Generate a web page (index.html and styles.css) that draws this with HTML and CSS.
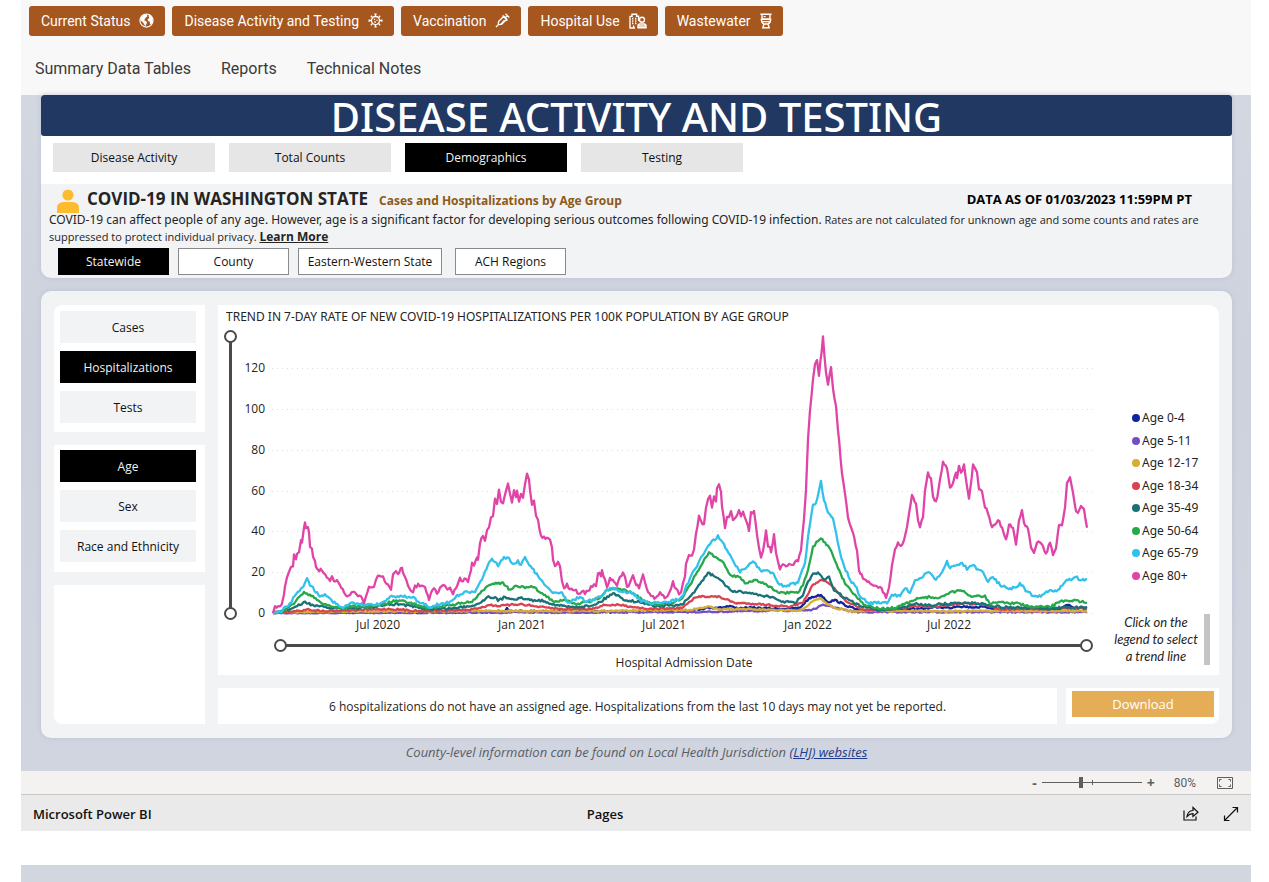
FILE: index.html
```html
<!DOCTYPE html>
<html lang="en">
<head>
<meta charset="utf-8">
<title>COVID-19 Data Dashboard</title>
<link rel="stylesheet" href="styles.css">
</head>
<body>
<div class="page">
  <header class="top">
    <nav class="pills">
      <button class="pill">Current Status
        <svg viewBox="0 0 16 16" width="15" height="15"><circle cx="8" cy="8" r="7" fill="none" stroke="#fff" stroke-width="1.2"/><path fill="#fff" d="M2 4.500 5.500 1.500 8.700 1.400 8.600 4 6.600 5.200 6.400 7 4.800 7.400 7.400 8.600 8.600 10 7.600 12.200 6.600 14.400 5.400 11.600 3.600 9.400 1.400 8ZM10.200 1.600 13 3 14.600 6.400 14.600 9.600 12.800 12.600 11.600 11.200 11.600 9.400 9.600 8.600 9.200 6.600 11 5.400 10.400 4Z"/></svg></button>
      <button class="pill">Disease Activity and Testing
        <svg viewBox="0 0 16 16" width="15" height="15" fill="none" stroke="#fff" stroke-width="1.400"><circle cx="8" cy="8" r="4.300"/><path d="M8 3.700V1M8 12.300V15M3.700 8H1M12.300 8H15M5 5 3 3M11 5l2-2M5 11l-2 2M11 11l2 2M6.800 1.200h2.400M6.800 14.800h2.400M1.200 6.800v2.400M14.800 6.800v2.400"/><path d="M6.200 6.800h1.400M9 7.800h1.200M6.800 9.600h1.600"/></svg></button>
      <button class="pill">Vaccination
        <svg viewBox="0 0 16 16" width="15" height="15" fill="none" stroke="#fff" stroke-width="1.400"><path d="M1 15l2.600-2.600M3.600 12.400 3.800 9 9.400 3.400l3.200 3.200L7 12.200ZM8 2.800l5.200 5.200M11 5l2.200-2.200M11.200.8l4 4M6 12.200 10 8"/></svg></button>
      <button class="pill">Hospital Use
        <svg viewBox="0 0 18 16" width="18" height="16" fill="none" stroke="#fff" stroke-width="1.400"><path d="M1 15V3.400h2V1.200h4.600v2h2V8M.4 15H6M4.600 15v-2.400"/><path d="M3 5.600h1.400M6 5.600h1.400M3 8h1.400M6 8h1.400M3 10.400h1.400M6 10.400h1.400" stroke-width="1.600"/><circle cx="13" cy="6.800" r="2.500"/><path d="M9 14.800v-1.800q0-2 2-2h4q2 0 2 2v1.800ZM9 13h8"/></svg></button>
      <button class="pill">Wastewater
        <svg viewBox="2 0 12 16" width="12" height="16" fill="none" stroke="#fff" stroke-width="1.400"><path d="M2.400 1.200h11.200M4 1.200v4.800h8V1.200M5.600 3.600h2M2.600 6.400h10.800M3.400 6.400c0 2.400 1 4 2.600 4.600h4c1.600-.6 2.600-2.200 2.600-4.600M4.600 8.600h6.800M6 11l-1.200 3.800h6.400L10 11"/></svg></button>
    </nav>
    <nav class="links">
      <a href="#tables">Summary Data Tables</a>
      <a href="#reports">Reports</a>
      <a href="#notes">Technical Notes</a>
    </nav>
  </header>

  <main class="stage">
    <section class="card intro-card">
      <h1 class="banner">DISEASE ACTIVITY AND TESTING</h1>
      <div class="tabs">
        <button class="tab">Disease Activity</button>
        <button class="tab">Total Counts</button>
        <button class="tab dark">Demographics</button>
        <button class="tab">Testing</button>
      </div>
      <div class="intro">
        <div class="heading">
          <svg class="person" viewBox="0 0 24 24" width="24" height="24" fill="#fdbb30"><circle cx="12" cy="6" r="5.600"/><path d="M1 24v-4.500Q1 13 7.500 13h9Q23 13 23 19.500V24Z"/></svg>
          <h2>COVID-19 IN WASHINGTON STATE</h2>
          <h3>Cases and Hospitalizations by Age Group</h3>
          <strong class="asof">DATA AS OF 01/03/2023 11:59PM PT</strong>
        </div>
        <p class="copy"><span class="lead">COVID-19 can affect people of any age. However, age is a significant factor for developing serious outcomes following COVID-19 infection.</span> Rates are not calculated for unknown age and some counts and rates are suppressed to protect individual privacy. <a class="more" href="#more">Learn More</a></p>
        <div class="scopes">
          <button class="scope dark">Statewide</button>
          <button class="scope">County</button>
          <button class="scope wide">Eastern-Western State</button>
          <button class="scope">ACH Regions</button>
        </div>
      </div>
    </section>

    <section class="card board">
      <aside class="side">
        <div class="group first">
          <button class="choice">Cases</button>
          <button class="choice dark">Hospitalizations</button>
          <button class="choice">Tests</button>
        </div>
        <div class="group">
          <button class="choice dark">Age</button>
          <button class="choice">Sex</button>
          <button class="choice">Race and Ethnicity</button>
        </div>
        <div class="group filler"></div>
      </aside>
      <div class="content">
        <div class="chart">
          <div class="chart-main">
            <h4>TREND IN 7-DAY RATE OF NEW COVID-19 HOSPITALIZATIONS PER 100K POPULATION BY AGE GROUP</h4>
            <div class="plot-row">
              <div class="span vertical">
                <input type="range" aria-label="Lowest rate" value="0">
                <input type="range" aria-label="Highest rate" value="100">
              </div>
              <svg class="plot" id="plot" viewBox="238 329 860 304" role="img" aria-label="Hospitalization rate by age group"></svg>
            </div>
            <div class="span horizontal">
              <input type="range" aria-label="First date" value="0">
              <input type="range" aria-label="Last date" value="100">
            </div>
            <div class="axis-title">Hospital Admission Date</div>
          </div>
          <div class="legend-col">
            <ul class="legend">
              <li>Age 0-4</li>
              <li>Age 5-11</li>
              <li>Age 12-17</li>
              <li>Age 18-34</li>
              <li>Age 35-49</li>
              <li>Age 50-64</li>
              <li>Age 65-79</li>
              <li>Age 80+</li>
            </ul>
            <div class="hint">Click on the legend to select a trend line</div>
          </div>
        </div>
        <div class="bottom">
          <p class="note">6 hospitalizations do not have an assigned age. Hospitalizations from the last 10 days may not yet be reported.</p>
          <div class="download"><button>Download</button></div>
        </div>
      </div>
    </section>
    <p class="county">County-level information can be found on Local Health Jurisdiction <a href="#lhj">(LHJ) websites</a></p>
  </main>

  <div class="zoombar">
    <button aria-label="Zoom out">-</button>
    <input type="range" aria-label="Zoom" value="39">
    <button aria-label="Zoom in">+</button>
    <span>80%</span>
    <button class="fit" aria-label="Fit to page"><svg viewBox="0 0 16 12" width="16" height="12" fill="none" stroke="#605e5c"><path d="M.5.5h15v11H.5ZM2.500 4.500v-2h2M11.500 2.500h2v2M13.500 7.500v2h-2M4.500 9.500h-2v-2"/></svg></button>
  </div>
  <footer class="bi">
    <a href="#bi">Microsoft Power BI</a>
    <span class="pages">Pages</span>
    <div class="tools">
      <button aria-label="Share"><svg viewBox="0 0 16 16" width="16" height="16" fill="none" stroke="#111" stroke-width="1.200"><path d="M1 4.500v9.500h12v-3.500"/><path d="M4 10.500Q4.500 5 10 4.500V1.500L15 6.200 10 10.500V7.600Q6.500 7.500 4 10.500Z"/></svg></button>
      <button aria-label="Full screen"><svg viewBox="0 0 16 16" width="16" height="16" fill="none" stroke="#111" stroke-width="1.200"><path d="M1.500 14.500 14.500 1.500M9.500 1.500h5v5M1.500 9.500v5h5"/></svg></button>
    </div>
  </footer>
  <div class="next"></div>
</div>
<script src="script.js"></script>
</body>
</html>
```
FILE: styles.css
```css
* { box-sizing: border-box; }
body { margin: 0; background: #fff; color: #252423; font: 12px/18px "Open Sans", "Noto Sans", sans-serif; }
h1, h2, h3, h4, p, ul { margin: 0; padding: 0; }
button { font: inherit; color: inherit; border: 0; background: none; padding: 0; cursor: pointer; }
.page { margin: 0 18px 0 21px; }
.top { background: #f8f8f8; height: 95px; font-family: Roboto, sans-serif; }
.pills { display: flex; gap: 7px; padding: 6px 8px 0; }
.pill { display: flex; align-items: center; gap: 9px; height: 30px; padding: 0 11px 1px 12px; background: #a6561f; color: #fff; border-radius: 3px; font-size: 14px; white-space: nowrap; }
.links { display: flex; gap: 30px; padding: 20px 14px 0; font-size: 16px; line-height: 26px; }
.links a { color: #3a3a3a; text-decoration: none; }

.stage { background: linear-gradient(#d3d7e0, #cdd2dd 40%, #d1d5df); padding: 0 19px 10px 20px; }
.card { background: #f2f3f5; border-radius: 10px; box-shadow: 0 0 5px #bcc1d2; }
.intro-card { border-radius: 3px 3px 10px 10px; overflow: hidden; }
.banner { height: 41px; background: #213862; border-radius: 3px; color: #fff; text-align: center; font: 500 40px/43px "Noto Sans", sans-serif; }
.tabs { display: flex; gap: 14px; padding: 7px 12px 12px; background: #fff; }
.tab { width: 162px; height: 29px; background: #e6e6e6; color: #111; }
button.dark { background: #000; color: #f2f2f2; border-color: #000; }
.intro { padding: 3px 13px 3px 8px; }
.heading { display: flex; align-items: center; height: 24px; }
.person { margin: 4px 7px 0; }
h2 { font-size: 17px; line-height: 24px; font-weight: 700; }
h3 { font-size: 12px; font-weight: 700; color: #8d5a17; margin-left: 11px; padding-top: 3px; }
.asof { margin-left: auto; margin-right: 27px; color: #000; font-size: 13px; }
.copy { font-size: 11px; line-height: 17px; }
.lead { font-family: "Noto Sans", sans-serif; font-size: 12px; }
.more { font-size: 12px; font-weight: 700; color: #252423; }
.scopes { display: flex; gap: 9px; padding: 3px 9px 0; }
.scope { width: 111px; height: 27px; border: 1px solid #8a8a8a; background: #fff; color: #111; }
.scope.wide { width: 144px; margin-right: 4px; }

.board { margin-top: 13px; padding: 14px 13px; display: flex; gap: 13px; }
.side { width: 151px; flex: none; display: flex; flex-direction: column; gap: 13px; }
.group { background: #fff; padding: 5px 9px 10px 6px; display: flex; flex-direction: column; gap: 8px; }
.group.first { border-top-left-radius: 8px; padding-top: 6px; padding-bottom: 9px; }
.filler { flex: 1; border-bottom-left-radius: 8px; }
.choice { height: 32px; padding-top: 2px; background: #f2f3f5; color: #111; }
.content { flex: 1; min-width: 0; display: flex; flex-direction: column; gap: 13px; }
.chart { background: #fff; border-top-right-radius: 10px; display: flex; height: 370px; }
.chart-main { flex: 1; min-width: 0; }
h4 { font: 12px/24px "Noto Sans", sans-serif; padding-left: 8px; }
.plot-row { display: flex; padding-left: 6px; gap: 1px; }
.plot { flex: 1; min-width: 0; display: block; font-size: 12px; }
.plot text { fill: #252423; }
.plot .series { fill: none; stroke-width: 2.3px; stroke-linejoin: round; }
.plot .grid { stroke: #dcdcdc; stroke-dasharray: 1 4; }
.span { position: relative; flex: none; }
.span::before { content: ""; position: absolute; background: #4a4a4a; }
.span input { position: absolute; inset: 0; margin: 0; width: 100%; height: 100%; appearance: none; background: none; pointer-events: none; }
.span input::-webkit-slider-thumb { appearance: none; box-sizing: border-box; width: 13px; height: 13px; border: 2px solid #4a4a4a; border-radius: 50%; background: #fff; pointer-events: auto; }
.vertical { width: 13px; height: 290px; margin-top: 1px; }
.vertical::before { left: 5px; width: 3px; top: 10px; bottom: 10px; }
.vertical input { writing-mode: vertical-lr; direction: rtl; }
.horizontal { height: 13px; margin: 6px 5px 0 56px; }
.horizontal::before { top: 5px; height: 3px; left: 10px; right: 10px; }
.axis-title { text-align: center; padding-left: 52px; line-height: 22px; }
.legend-col { width: 121px; flex: none; padding: 102px 9px 0 0; }
.legend { list-style: none; padding-left: 34px; height: 180px; display: grid; grid-auto-rows: 1fr; font-family: "Noto Sans", sans-serif; }
.legend li { color: var(--dot); white-space: nowrap; display: flex; align-items: center; gap: 2px; }
.legend li::before { content: ""; width: 8px; height: 8px; border-radius: 50%; background: currentColor; }
.legend span { color: #252423; }
.hint { margin-top: 27px; margin-left: 15px; padding-right: 5px; border-right: 6px solid #c4c4c4; text-align: center; font: italic 13px/17px Lato, sans-serif; }
.bottom { display: flex; gap: 9px; height: 36px; }
.note { flex: 1; background: #fff; text-align: center; line-height: 38px; }
.download { width: 153px; background: #fff; padding: 3px 5px 7px 6px; border-bottom-right-radius: 8px; }
.download button { display: block; width: 100%; height: 26px; background: #e5ad56; color: #fff; font-size: 13px; }
.county { text-align: center; font-size: 13px; font-style: italic; color: #595d66; margin-top: 5px; line-height: 18px; }
.county a { color: #1f3c8c; }

.zoombar { height: 24px; background: #f3f2f1; border-bottom: 1px solid #c8c8c8; display: flex; align-items: center; justify-content: flex-end; gap: 5px; padding-right: 18px; color: #605e5c; font-size: 12px; }
.zoombar button { font-weight: 700; font-size: 14px; line-height: 18px; }
.zoombar input { appearance: none; width: 100px; height: 11px; margin: 0; background: linear-gradient(#605e5c, #605e5c) center / 100% 1px no-repeat, linear-gradient(#605e5c, #605e5c) 50px center / 1px 5px no-repeat; }
.zoombar input::-webkit-slider-thumb { appearance: none; width: 4px; height: 11px; background: #605e5c; }
.zoombar span { margin: 0 16px 0 14px; font-family: Roboto, sans-serif; }
.zoombar .fit { display: flex; }
.bi { height: 36px; background: #eaeaea; color: #111; font-size: 13px; font-weight: 600; display: grid; grid-template-columns: 1fr auto 1fr; align-items: center; padding: 2px 12px 0; }
.bi a { color: inherit; text-decoration: none; }
.pages { margin-right: 62px; }
.tools { display: flex; gap: 24px; justify-content: flex-end; }
.tools svg { display: block; }
.next { margin-top: 34px; height: 17px; background: #d1d6df; }
```
FILE: script.js
```js
const BASE = 613, STEP = 40.8;
const series = [
  ["#12239e", 1, "273,613 490,612 500,611 505,612 507,608 510,611 600,612 690,611 705,608 725,607 730,606 735,608 760,608 780,609 800,608 806,601 812,597 821,595 828,602 835,600 845,605 860,611 900,610 915,609 940,607 950,608 957,606 970,607 985,607 1000,609 1060,609 1068,605 1075,608 1087,607"],
  ["#744ec2", .7, "273,613 700,612 812,610 823,605 830,606 840,609 855,612 1087,612"],
  ["#d6ae33", .8, "273,612 450,611 600,611 690,610 700,608 708,606 715,609 740,609 770,610 800,611 812,602 820,598 826,603 834,608 850,611 1087,611"],
  ["#d64550", .9, "273,613 300,611 307,609 320,611 390,609 420,611 470,610 490,605 500,606 520,604 540,607 560,609 590,609 605,605 620,605 650,609 682,608 695,598 702,596 720,597 735,603 760,604 790,607 803,603 812,586 822,580 830,584 845,600 860,609 880,611 915,606 930,607 965,603 985,605 1000,609 1040,609 1065,608 1087,609"],
  ["#197278", 1.2, "273,613 290,609 300,605 305,602 315,606 330,608 360,608 375,607 385,605 400,604 410,606 425,609 440,609 455,608 470,606 480,603 487,597 495,597 498,601 505,597 513,599 520,598 530,600 545,601 555,605 570,607 590,606 600,602 613,593 625,600 640,602 655,606 682,605 690,597 700,584 708,573 718,578 733,592 745,592 770,597 780,601 795,603 803,595 808,582 813,574 818,573 824,580 829,577 834,590 845,598 860,606 880,610 900,608 915,604 930,605 960,603 975,603 985,604 1000,607 1030,608 1050,609 1065,607 1087,608"],
  ["#27a84b", 1.2, "273,613 285,611 295,602 304,592 310,595 320,602 330,606 345,609 350,606 365,607 380,605 395,601 402,601 410,603 420,606 430,608 440,607 450,605 463,603 472,602 480,594 487,586 493,583 503,583 510,590 517,586 525,588 533,587 545,595 553,601 565,600 575,604 590,602 600,597 607,590 620,589 633,593 645,602 655,604 670,603 682,599 690,585 700,567 709,552 715,557 722,561 730,575 740,577 745,583 757,580 770,587 778,593 798,593 803,585 808,570 813,547 818,541 821,539 825,542 832,553 838,568 845,583 855,595 865,605 880,609 895,608 910,602 920,598 930,597 940,598 950,592 962,591 970,596 985,596 990,604 1000,602 1020,604 1030,607 1050,607 1060,602 1065,600 1087,602"],
  ["#33c1ec", 1.5, "273,613 282,611 290,603 298,592 305,583 307,578 310,585 320,596 325,594 333,602 343,608 353,603 365,605 380,604 390,597 402,596 412,597 420,603 430,607 440,604 450,602 460,594 467,592 475,592 482,580 488,564 492,558 498,566 504,557 509,558 513,564 518,561 521,565 525,557 535,573 543,582 553,593 562,593 568,602 580,597 587,602 600,597 610,588 620,591 633,593 640,600 650,603 667,603 682,597 690,578 700,560 707,547 718,536 727,550 733,560 740,572 747,567 753,561 760,570 772,572 778,583 783,586 798,583 805,563 808,537 813,505 816,503 819,490 821,481 824,500 828,512 833,518 838,543 843,563 850,580 855,585 860,597 868,603 887,603 892,595 900,596 905,588 910,593 915,580 923,577 928,572 936,580 942,572 947,561 950,568 962,563 967,569 972,565 983,572 988,582 993,577 1000,585 1010,588 1016,588 1020,583 1027,592 1038,597 1048,592 1058,590 1065,582 1077,576 1080,581 1087,579"],
  ["#e044a7", 1.8, "273,613 275,607 278,606 281,606 282,604 284,595 285,587 287,577 289,571 291,567 293,566 294,555 296,560 297,553 299,552 301,540 302,542 304,528 305,523 306,528 308,527 309,532 310,546 312,548 313,557 315,560 316,567 318,570 322,570 325,574 327,578 330,581 332,576 334,581 337,580 340,586 344,593 346,596 350,596 353,592 356,593 358,597 361,597 364,603 366,596 369,587 374,587 376,580 378,576 383,577 385,582 389,587 391,589 393,575 396,572 398,574 402,567 403,573 405,577 408,585 411,590 413,592 415,586 423,585 425,588 428,595 429,600 431,593 434,588 437,594 440,588 442,585 446,588 450,587 453,594 456,589 460,578 463,581 466,578 468,582 471,570 472,562 474,566 477,557 478,560 480,543 483,535 485,541 487,530 489,527 491,517 493,516 495,499 497,504 499,490 501,502 503,503 506,490 508,483 510,494 512,502 514,490 516,497 517,490 519,501 521,493 523,497 525,485 527,473 529,480 530,490 532,504 534,501 536,515 538,520 541,536 544,537 550,540 552,547 553,560 555,566 558,561 560,567 562,582 564,589 567,584 570,589 573,590 576,590 579,594 582,591 585,594 588,591 591,587 594,584 596,587 598,573 601,576 602,571 605,580 607,588 610,578 614,582 617,586 620,576 623,573 625,577 627,587 630,583 633,575 636,585 639,588 641,582 643,574 645,582 648,592 651,595 653,597 657,597 660,593 662,595 666,598 669,594 671,589 673,582 676,589 679,594 681,592 683,583 685,577 686,563 689,555 692,556 694,550 696,534 699,516 701,522 704,525 706,507 708,499 710,496 712,508 714,497 716,502 717,489 719,485 721,492 722,507 725,528 727,517 729,517 731,512 733,520 736,517 739,511 741,517 743,512 746,520 749,531 751,513 754,511 757,535 759,548 761,558 763,551 766,531 768,547 770,547 771,553 774,534 776,552 778,562 780,569 783,564 786,566 789,563 792,565 795,562 798,562 801,550 804,520 806,490 808,440 810,410 813,380 815,365 817,360 819,375 823,337 826,373 828,385 831,368 833,388 836,407 838,430 842,473 845,493 848,517 853,533 857,550 859,570 863,578 866,580 870,583 875,586 880,587 883,592 886,598 889,587 892,565 895,550 898,543 902,545 904,540 907,527 909,513 912,495 916,503 918,520 920,528 923,517 925,490 928,473 931,478 933,497 936,502 939,487 943,462 947,468 950,487 953,483 956,473 957,478 959,465 961,473 964,465 967,487 969,498 973,465 977,472 979,490 982,492 985,507 988,513 992,527 998,520 1002,528 1006,540 1009,525 1013,528 1016,544 1019,520 1022,511 1024,522 1028,528 1031,547 1034,553 1037,542 1040,542 1043,547 1046,553 1050,543 1053,555 1056,548 1058,533 1059,525 1062,525 1065,508 1067,483 1070,478 1073,493 1076,511 1078,513 1081,506 1084,510 1087,528"]
];

let seed = 7;
function noise() {
  seed = (seed * 16807) % 2147483647;
  return seed / 2147483647 - 0.5;
}

function daily(text, amount) {
  const pts = text.split(" ").map(p => p.split(",").map(Number));
  const out = [pts[0]];
  for (let i = 1; i < pts.length; i++) {
    const [x0, y0] = pts[i - 1], [x1, y1] = pts[i];
    const n = Math.max(1, Math.round((x1 - x0) / 1.5));
    for (let k = 1; k <= n; k++) {
      const t = k / n;
      const wob = k < n ? noise() * amount * 2 : noise() * amount;
      out.push([(x0 + (x1 - x0) * t).toFixed(1), Math.min(BASE, y0 + (y1 - y0) * t + wob).toFixed(1)]);
    }
  }
  return out.map(p => p.join(",")).join(" ");
}

let svg = "";
for (let i = 0; i <= 6; i++) {
  const y = BASE - Math.round(i * STEP);
  svg += `<line class="grid" x1="272" x2="1096" y1="${y + .5}" y2="${y + .5}"/><text x="265" y="${y + 4}" text-anchor="end">${i * 20}</text>`;
}
for (const [x, label] of [[378, "Jul 2020"], [522, "Jan 2021"], [664, "Jul 2021"], [808, "Jan 2022"], [949, "Jul 2022"]]) {
  svg += `<text x="${x}" y="629" text-anchor="middle">${label}</text>`;
}
for (const [color, amount, text] of series) {
  svg += `<polyline class="series" stroke="${color}" points="${daily(text, amount)}"/>`;
}
document.getElementById("plot").innerHTML = svg;

document.querySelectorAll(".legend li").forEach((li, i) => {
  const label = document.createElement("span");
  label.textContent = li.textContent;
  li.textContent = "";
  li.append(label);
  li.style.setProperty("--dot", series[i][0]);
});
```
